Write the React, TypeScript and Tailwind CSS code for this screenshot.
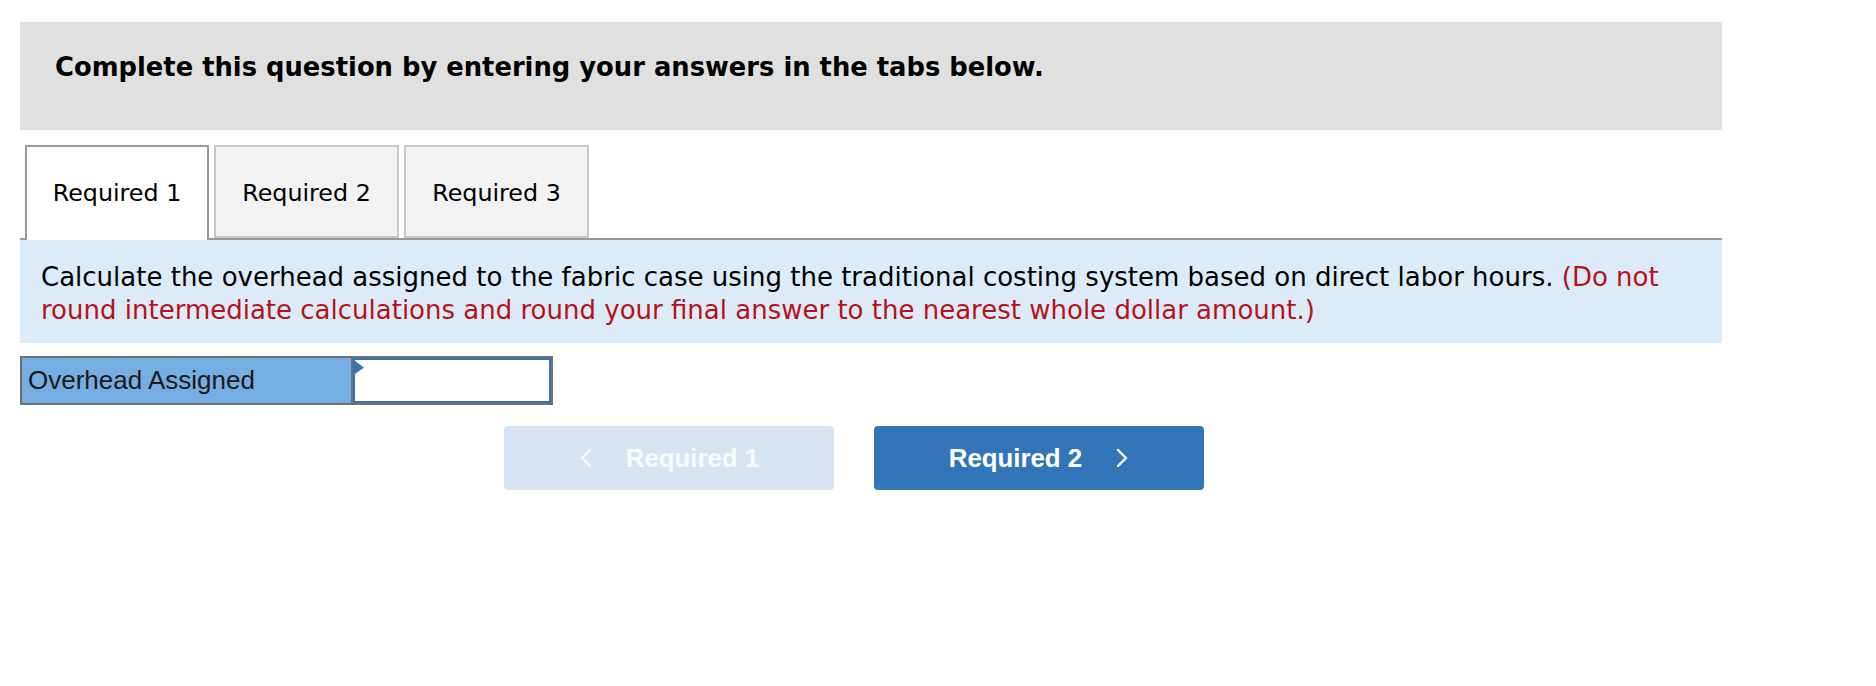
import React from "react";

const verdana = { fontFamily: '"DejaVu Sans", Verdana, sans-serif' };
const arial = { fontFamily: '"Liberation Sans", Arial, sans-serif' };

function ChevronLeft() {
  return (
    <svg width="13" height="20" viewBox="0 0 13 20" fill="none">
      <polyline points="11,2 3,10 11,18" stroke="currentColor" strokeWidth="2.4" strokeLinecap="round" strokeLinejoin="round" />
    </svg>
  );
}

function ChevronRight() {
  return (
    <svg width="13" height="20" viewBox="0 0 13 20" fill="none">
      <polyline points="2,2 10,10 2,18" stroke="currentColor" strokeWidth="2.4" strokeLinecap="round" strokeLinejoin="round" />
    </svg>
  );
}

export default function App() {
  return (
    <div className="w-[1876px] h-[686px] bg-white overflow-hidden">
      <div className="ml-[20px] pt-[22px] w-[1702px]">
        {/* Header */}
        <div className="h-[108px] bg-[#e0e0e0] pl-[35px] pt-[30px]">
          <p className="text-[25.8px] leading-[30px] font-bold text-black" style={verdana}>
            Complete this question by entering your answers in the tabs below.
          </p>
        </div>

        {/* Tabs */}
        <div className="mt-[15px] flex items-end gap-[5px] pl-[5px] border-b-2 border-[#999999]">
          <div className="w-[184px] h-[95px] -mb-[2px] bg-white border-2 border-b-0 border-[#9a9a9a] flex items-center justify-center">
            <span className="text-[23.8px] text-black" style={verdana}>Required 1</span>
          </div>
          <div className="w-[185px] h-[93px] pt-[4px] bg-[#f2f2f2] border-2 border-[#c8c8c8] flex items-center justify-center">
            <span className="text-[23.8px] text-black" style={verdana}>Required 2</span>
          </div>
          <div className="w-[185px] h-[93px] pt-[4px] bg-[#f2f2f2] border-2 border-[#c8c8c8] flex items-center justify-center">
            <span className="text-[23.8px] text-black" style={verdana}>Required 3</span>
          </div>
        </div>

        {/* Instructions */}
        <div className="bg-[#dbecf8] pl-[21px] pr-[21px] pt-[21px] pb-[16px]">
          <p className="text-[26px] leading-[33px] text-black" style={verdana}>
            Calculate the overhead assigned to the fabric case using the traditional costing system based on direct labor hours.{" "}
            <span className="text-[#b8111a]">
              (Do not round intermediate calculations and round your final answer to the nearest whole dollar amount.)
            </span>
          </p>
        </div>

        {/* Answer row */}
        <div className="mt-[13px] w-[533px] h-[49px] flex border-2 border-[#707070]">
          <div className="w-[331px] h-full bg-[#75aee2] border-r-2 border-[#707070] flex items-center pl-[6px]">
            <span className="text-[26px] text-[#1a1a1a]" style={arial}>Overhead Assigned</span>
          </div>
          <div className="flex-1 h-full relative bg-white border-2 border-[#3573b4]">
            <svg className="absolute left-0 top-[1px]" width="9" height="13" viewBox="0 0 9 13">
              <polygon points="0,0 9,6.5 0,13" fill="#3573b4" />
            </svg>
          </div>
        </div>

        {/* Navigation buttons */}
        <div className="mt-[21px] pl-[484px] flex gap-[40px]">
          <button className="w-[330px] h-[64px] rounded-[4px] bg-[#d6e4f1] text-[#f7fafd] flex items-center justify-center gap-[34px]">
            <ChevronLeft />
            <span className="text-[25.8px] font-bold" style={arial}>Required 1</span>
          </button>
          <button className="w-[330px] h-[64px] rounded-[4px] bg-[#3276b9] text-white flex items-center justify-center gap-[34px]">
            <span className="text-[25.8px] font-bold" style={arial}>Required 2</span>
            <ChevronRight />
          </button>
        </div>
      </div>
    </div>
  );
}
